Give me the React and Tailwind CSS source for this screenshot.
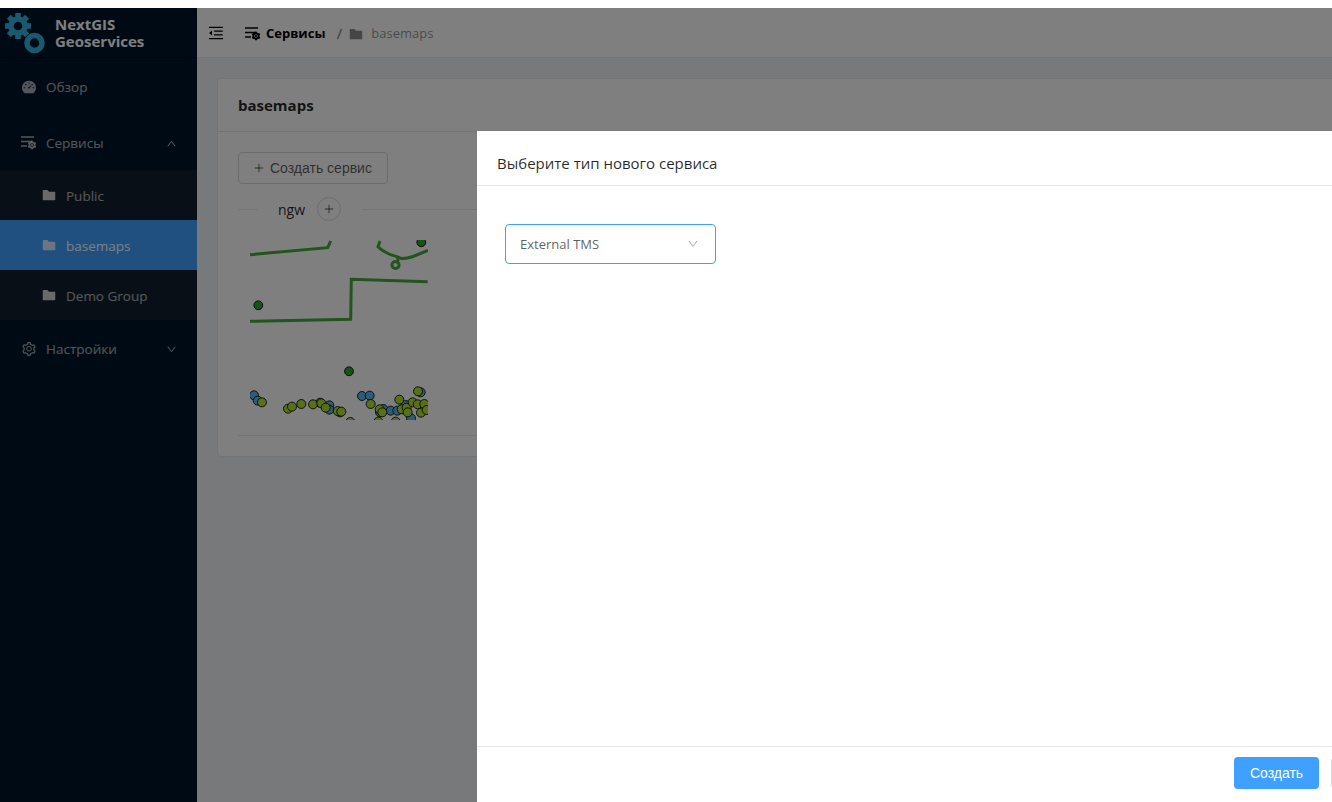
import React from "react";
import { AiFillDashboard, AiFillFolder, AiFillSetting, AiOutlineSetting, AiOutlineMenuFold, AiOutlineUp, AiOutlineDown, AiOutlinePlus } from "react-icons/ai";

const sans = "font-['Open_Sans',sans-serif]";

const BLUE = [[57,121],[68,137],[255,143],[283,151],[283,164],[381,123],[404,122],[435,172],[445,162],[467,167],[487,167],[512,150],[528,190],[557,112],[315,172]];
const LIME = [[81,142],[159,161],[171,155],[199,147],[234,148],[259,145],[272,158],[308,168],[319,170],[346,201],[407,147],[434,163],[442,172],[493,134],[500,163],[515,158],[518,172],[533,142],[548,148],[549,109],[558,173],[568,147],[430,200],[482,200],[575,165]];

function ServicesIcon({ className }) {
  return (
    <svg viewBox="0 0 16 14" className={className} fill="none" stroke="currentColor" strokeWidth="1.3">
      <path d="M0 1h13M0 5.5h11M0 10h6" />
      <AiFillSetting x="6" y="4" size="10" stroke="none" fill="currentColor" />
    </svg>
  );
}

function LogoIcon() {
  const teeth = [0, 45, 90, 135, 180, 225, 270, 315];
  return (
    <svg viewBox="0 0 50 50" className="w-[50px] h-[50px] text-[#34b4dc]">
      <g fill="currentColor">
        {teeth.map((a) => (
          <rect key={a} x="15.2" y="5" width="5.6" height="6" transform={`rotate(${a} 18 18)`} />
        ))}
      </g>
      <circle cx="18" cy="18" r="7" fill="none" stroke="currentColor" strokeWidth="5.5" />
      <circle cx="34.5" cy="35" r="7.5" fill="none" stroke="currentColor" strokeWidth="5.5" />
    </svg>
  );
}

function MapPreview() {
  return (
    <svg viewBox="0 0 178 180" className="w-[178px] h-[180px] block ml-3" fill="none">
      <g stroke="#44a83a" strokeWidth="3">
        <path d="M0 14.7L77.7 7.7L80.7 1" />
        <path d="M0 81.3L100.7 79.3L101.3 39.3L177.7 41.7" />
        <path d="M130 1L128 6.7C131 10 135 12 139 14C143 16 147 16 150.7 18.3C154 19 158 18 163 16.5L178 10.5" />
        <path d="M147 17C149 20 148 21 146 23" />
        <circle cx="145.5" cy="25" r="3.6" />
      </g>
      <circle cx="8.3" cy="65.3" r="4.4" fill="#2aa82a" stroke="#111" />
      <circle cx="171.3" cy="2.3" r="4.4" fill="#2aa82a" stroke="#111" />
      <circle cx="99" cy="131.3" r="4.4" fill="#2aa82a" stroke="#111" />
      {BLUE.map(([x, y]) => (
        <circle key={`b${x}-${y}`} cx={x / 3 - 15} cy={y / 3 + 115} r="4.5" fill="#58b8f0" stroke="#111" strokeWidth="0.9" />
      ))}
      {LIME.map(([x, y]) => (
        <circle key={`l${x}-${y}`} cx={x / 3 - 15} cy={y / 3 + 115} r="4.5" fill="#b0e030" stroke="#111" strokeWidth="0.9" />
      ))}
    </svg>
  );
}

function SubItem({ label, active }) {
  return (
    <div className={`h-[50px] flex items-center pl-[41px] gap-[9px] ${active ? "bg-[#40a0ff] text-white" : "text-white/65"}`}>
      <AiFillFolder className="w-4 h-4 text-white/80" />
      <span className="text-[13.5px] pt-0.5">{label}</span>
    </div>
  );
}

export default function App() {
  return (
    <div className={`relative h-[802px] w-[1332px] overflow-hidden flex flex-col bg-white ${sans}`}>
      <div className="h-2 bg-white shrink-0" />

      <div className="flex flex-1 min-h-0">
        {/* Sidebar */}
        <aside className="w-[197px] shrink-0 bg-[#001529] text-white/65">
          <div className="h-[50px] flex items-center border-b border-black/40">
            <LogoIcon />
            <div className="ml-[5px] text-white font-bold text-[15px] leading-[17px]">
              <div>NextGIS</div>
              <div>Geoservices</div>
            </div>
          </div>

          <div className="h-[50px] mt-1 flex items-center pl-[21px] gap-[9px]">
            <AiFillDashboard className="w-4 h-4" />
            <span className="text-[13.5px]">Обзор</span>
          </div>

          <div className="h-[50px] mt-1.5 mb-0.5 flex items-center pl-[21px] pr-5">
            <ServicesIcon className="w-[16px] h-[14px]" />
            <span className="text-[13.5px] ml-[9px] flex-1">Сервисы</span>
            <AiOutlineUp className="w-[11px] h-[11px]" />
          </div>
          <div className="bg-[#111f2c]">
            <SubItem label="Public" />
            <SubItem label="basemaps" active />
            <SubItem label="Demo Group" />
          </div>

          <div className="h-[50px] mt-1 flex items-center pl-[21px] pr-5">
            <AiOutlineSetting className="w-4 h-4" />
            <span className="text-[13.5px] ml-[9px] flex-1">Настройки</span>
            <AiOutlineDown className="w-[11px] h-[11px]" />
          </div>
        </aside>

        {/* Main */}
        <main className="flex-1 bg-[#f0f2f5] flex flex-col min-w-0">
          <header className="h-[50px] bg-white border-b border-[#e8e8e8] flex items-center pl-[10px] shrink-0">
            <AiOutlineMenuFold className="w-[18px] h-[18px] text-black" />
            <div className="flex items-center ml-[20px] text-[13px] pt-0.5">
              <ServicesIcon className="w-[16px] h-[14px] text-black" />
              <span className="ml-[5px] font-bold text-black">Сервисы</span>
              <span className="ml-[11px] text-black/45 text-[15px] font-semibold">/</span>
              <AiFillFolder className="ml-[6px] w-4 h-4 text-black/45" />
              <span className="ml-[7px] text-black/45">basemaps</span>
            </div>
          </header>

          <div className="pl-5 pt-5">
            <div className="bg-white border border-[#e8e8e8] rounded h-[379px] w-[1200px]">
              <div className="h-[53px] border-b border-[#e8e8e8] flex items-center pl-5 font-bold text-[15px] text-black/85">
                basemaps
              </div>
              <div className="px-5 pt-5">
                <button className="h-8 w-[150px] border border-[#d9d9d9] rounded-sm flex items-center pl-[14px] text-sm text-black/65 font-['Liberation_Sans',sans-serif]">
                  <AiOutlinePlus className="w-3 h-3 mr-[5px]" />
                  Создать сервис
                </button>
                <div className="flex items-center mt-[13px] h-6">
                  <div className="w-5 h-px bg-[#e8e8e8]" />
                  <span className="ml-5 text-sm text-black/85 pt-0.5">ngw</span>
                  <span className="ml-3 w-6 h-6 rounded-full border border-[#d9d9d9] flex items-center justify-center text-black/65">
                    <AiOutlinePlus className="w-3 h-3" />
                  </span>
                  <div className="ml-[21px] flex-1 h-px bg-[#e8e8e8]" />
                </div>
                <div className="mt-[19px] pb-[15px] border-b border-[#e8e8e8]">
                  <MapPreview />
                </div>
              </div>
            </div>
          </div>
        </main>
      </div>

      {/* Modal over a dimmed page */}
      <div className="absolute inset-x-0 bottom-0 top-2 bg-black/50 pl-[477px] pt-[123px] flex">
        <div className="w-[954px] shrink-0 bg-white flex flex-col">
          <div className="h-[55px] border-b border-[#e8e8e8] flex items-center pl-5 pt-[11px] text-[15px] text-black/85">
            Выберите тип нового сервиса
          </div>
          <div className="flex-1 pt-[38px] pl-7">
            <div className="w-[211px] h-10 border border-[#40a0ff] rounded flex items-center justify-between pl-[14px] pr-[16px] text-[13px] text-black/65">
              <span className="pt-0.5">External TMS</span>
              <AiOutlineDown className="w-3 h-3 text-black/30" />
            </div>
          </div>
          <div className="h-[56px] border-t border-[#e8e8e8] flex items-start justify-end gap-3 pr-4 pt-[10px] font-['Liberation_Sans',sans-serif] text-sm">
            <button className="w-[85px] h-8 rounded bg-[#40a0ff] text-white">Создать</button>
            <button className="w-[84px] h-8 rounded border border-[#d9d9d9] text-black/65">Отмена</button>
          </div>
        </div>
      </div>
    </div>
  );
}
